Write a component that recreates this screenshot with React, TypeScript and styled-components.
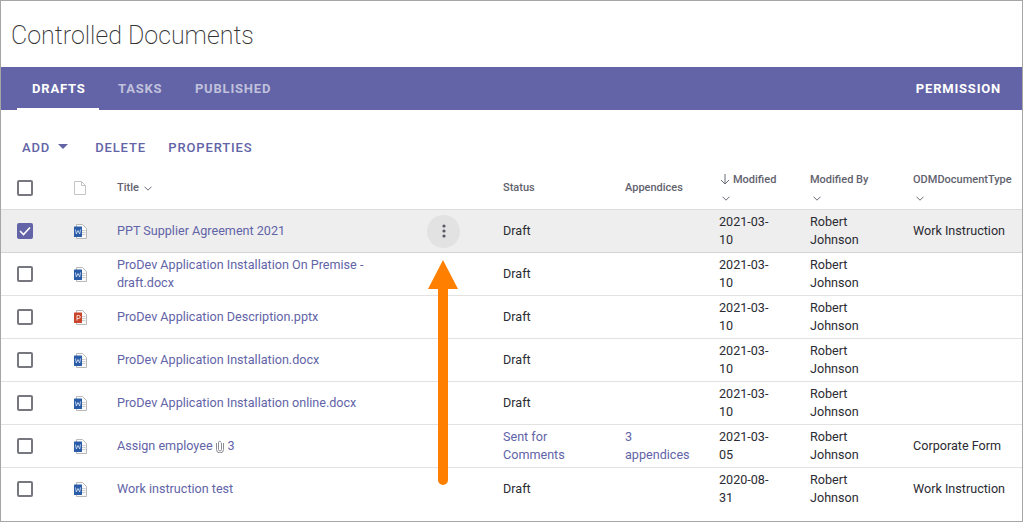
import React from "react";
import styled, { createGlobalStyle } from "styled-components";

const GlobalStyle = createGlobalStyle`
  html, body {
    margin: 0;
    padding: 0;
    background: #fff;
    font-family: Roboto, "Liberation Sans", sans-serif;
  }
`;

const COLUMNS = "72px 44px 386px 122px 94px 91px 103px 1fr";

const Frame = styled.div`
  position: relative;
  box-sizing: border-box;
  width: 1023px;
  height: 522px;
  border: 1px solid #a6a6a6;
  overflow: hidden;
  background: #fff;
`;

const PageTitle = styled.h1`
  margin: 0;
  height: 66px;
  padding: 2px 0 0 10px;
  box-sizing: border-box;
  display: flex;
  align-items: center;
  font-size: 25px;
  font-weight: 200;
  color: #333;
`;

const TabBar = styled.div`
  display: flex;
  height: 43px;
  background: #6264a7;
  padding: 0 21px 0 16px;
`;

const Tab = styled.div<{ $active?: boolean }>`
  box-sizing: border-box;
  height: 43px;
  padding: 2px 13.5px 0 15px;
  margin-right: 4px;
  display: flex;
  align-items: center;
  font-size: 13px;
  font-weight: 700;
  letter-spacing: 0.8px;
  color: ${({ $active }) => ($active ? "#fff" : "#c0c1dc")};
  border-bottom: 2px solid ${({ $active }) => ($active ? "#fff" : "transparent")};
`;

const Permission = styled.div`
  margin-left: auto;
  display: flex;
  align-items: center;
  font-size: 13px;
  font-weight: 700;
  letter-spacing: 0.8px;
  color: #fff;
`;

const Toolbar = styled.div`
  display: flex;
  align-items: center;
  height: 26px;
  margin-top: 24px;
  padding-left: 21px;
`;

const ToolButton = styled.div`
  display: flex;
  align-items: center;
  margin-right: 22.5px;
  font-size: 13px;
  font-weight: 500;
  letter-spacing: 0.85px;
  color: #6264a7;
`;

const Caret = styled.span`
  width: 0;
  height: 0;
  margin: -1px 4.5px 0 8px;
  border-left: 5px solid transparent;
  border-right: 5px solid transparent;
  border-top: 5px solid #6264a7;
`;

const HeaderRow = styled.div`
  display: grid;
  grid-template-columns: ${COLUMNS};
  height: 41px;
  margin-top: 9px;
  padding-bottom: 2px;
  align-items: center;
  border-bottom: 1px solid #dcdcdc;
  box-sizing: border-box;
`;

const HeaderCell = styled.div`
  font-size: 11px;
  font-weight: 500;
  line-height: 18px;
  color: #62626e;
`;

const StackedHeader = styled(HeaderCell)`
  padding-top: 2px;
`;

const Rows = styled.div`
  display: flex;
  flex-direction: column;
`;

const Row = styled.div<{ $selected?: boolean }>`
  display: grid;
  grid-template-columns: ${COLUMNS};
  height: 43px;
  box-sizing: border-box;
  align-items: center;
  background: ${({ $selected }) => ($selected ? "#eeeeee" : "#fff")};
  border-bottom: 1px solid ${({ $selected }) => ($selected ? "#d4d4d4" : "#e2e2e2")};
  &:last-child {
    border-bottom-color: transparent;
  }
`;

const CheckCell = styled.div`
  padding-left: 16px;
  display: flex;
`;

const Check = styled.span<{ $checked?: boolean }>`
  box-sizing: border-box;
  width: 16px;
  height: 16px;
  border-radius: 2px;
  border: 2px solid ${({ $checked }) => ($checked ? "#6264a7" : "#77777f")};
  background: ${({ $checked }) => ($checked ? "#6264a7" : "#fff")};
  display: flex;
  align-items: center;
  justify-content: center;
`;

const IconCell = styled.div`
  display: flex;
  padding-left: 1px;
`;

const TitleCell = styled.div`
  display: flex;
  align-items: center;
  justify-content: space-between;
  padding-right: 43px;
`;

const DocLink = styled.div`
  width: 275px;
  font-size: 12.6px;
  line-height: 18px;
  color: #6264a7;
`;

const Text = styled.div`
  font-size: 12.6px;
  line-height: 18px;
  color: #2b2b33;
`;

const LinkText = styled(Text)`
  width: 70px;
  color: #6264a7;
`;

const MoreButton = styled.div`
  flex: none;
  width: 33px;
  height: 33px;
  border-radius: 50%;
  background: #e2e2e2;
  display: flex;
  align-items: center;
  justify-content: center;
`;

const ArrowOverlay = styled.svg`
  position: absolute;
  left: 426px;
  top: 257px;
`;

const ChevronIcon = styled.svg<{ $gap: number }>`
  margin-left: ${({ $gap }) => $gap}px;
`;

const Chevron = ({ gap = 3 }: { gap?: number }) => (
  <ChevronIcon $gap={gap} width="8" height="5" viewBox="0 0 8 5" fill="none" stroke="#6b6b78" strokeWidth="1">
    <path d="M.5.7 4 4.200 7.500.7" />
  </ChevronIcon>
);

const BlankFile = () => (
  <svg width="12" height="14" viewBox="0 0 12 14" fill="#fff" stroke="#c4c4c4" strokeWidth="1">
    <path d="M.5.5h7l4 4v9h-11zM7.500.5v4h4" />
  </svg>
);

const FileIcon = ({ type }: { type: "word" | "ppt" }) => (
  <svg width="13" height="15" viewBox="0 0 13 15">
    <path d="M2.500.5h6l4 4v10h-10z" fill="#fafafa" stroke="#b9b9b9" />
    <path d="M8 6.500h3.500M8 8.500h3.500M8 10.500h3.500" stroke="#cfcfcf" />
    <rect x="0" y="2.500" width="8" height="10.500" rx="0.5" fill={type === "word" ? "#2b5ca8" : "#c8442a"} />
    {type === "word" ? (
      <path d="M1.500 5.500l.8 4.500 1.700-3.500 1.700 3.500.8-4.500" fill="none" stroke="#dbe6f5" strokeWidth="0.8" />
    ) : (
      <path d="M3 10.500V5.500h1.700a1.400 1.400 0 0 1 0 3H3" fill="none" stroke="#f8dfd9" strokeWidth="1" />
    )}
  </svg>
);

const ClipIcon = styled.svg`
  margin: 0 4px 0 3px;
  vertical-align: -3px;
`;

const Clip = () => (
  <ClipIcon width="8" height="13" viewBox="0 0 8 13" fill="none" stroke="#8a8a94" strokeWidth="1">
    <path d="M5.500 3v6.500a1.500 1.500 0 0 1-3 0V2.500a1.200 1.200 0 0 1 2.400 0" />
    <path d="M7.500 3v6.500a3.500 3.500 0 0 1-7 0V3" />
  </ClipIcon>
);

const SortArrow = styled.svg`
  vertical-align: -2px;
  margin-right: 2px;
`;

interface IDoc {
  title: React.ReactNode;
  file: "word" | "ppt";
  status?: string;
  appendices?: string;
  modified: string;
  type?: string;
}

const docs: IDoc[] = [
  { title: "PPT Supplier Agreement 2021", file: "word", modified: "2021-03-10", type: "Work Instruction" },
  { title: "ProDev Application Installation On Premise - draft.docx", file: "word", modified: "2021-03-10" },
  { title: "ProDev Application Description.pptx", file: "ppt", modified: "2021-03-10" },
  { title: "ProDev Application Installation.docx", file: "word", modified: "2021-03-10" },
  { title: "ProDev Application Installation online.docx", file: "word", modified: "2021-03-10" },
  {
    title: (
      <>
        Assign employee
        <Clip />3
      </>
    ),
    file: "word",
    status: "Sent for Comments",
    appendices: "3 appendices",
    modified: "2021-03-05",
    type: "Corporate Form",
  },
  { title: "Work instruction test", file: "word", modified: "2020-08-31", type: "Work Instruction" },
];

export default function App(): React.JSX.Element {
  return (
    <Frame>
      <GlobalStyle />
      <PageTitle>Controlled Documents</PageTitle>
      <TabBar>
        <Tab $active>DRAFTS</Tab>
        <Tab>TASKS</Tab>
        <Tab>PUBLISHED</Tab>
        <Permission>PERMISSION</Permission>
      </TabBar>
      <Toolbar>
        <ToolButton>
          ADD
          <Caret />
        </ToolButton>
        <ToolButton>DELETE</ToolButton>
        <ToolButton>PROPERTIES</ToolButton>
      </Toolbar>
      <HeaderRow>
        <CheckCell>
          <Check />
        </CheckCell>
        <IconCell>
          <BlankFile />
        </IconCell>
        <HeaderCell>
          Title
          <Chevron gap={5} />
        </HeaderCell>
        <HeaderCell>Status</HeaderCell>
        <HeaderCell>Appendices</HeaderCell>
        <StackedHeader>
          <SortArrow width="12" height="12" viewBox="0 0 12 12" fill="none" stroke="#6b6b78">
            <path d="M6 1v10M2 7l4 4 4-4" />
          </SortArrow>
          Modified
          <br />
          <Chevron />
        </StackedHeader>
        <StackedHeader>
          Modified By
          <br />
          <Chevron />
        </StackedHeader>
        <StackedHeader>
          ODMDocumentType
          <br />
          <Chevron />
        </StackedHeader>
      </HeaderRow>
      <Rows>
        {docs.map((doc, i) => (
          <Row key={i} $selected={i === 0}>
            <CheckCell>
              <Check $checked={i === 0}>
                {i === 0 && (
                  <svg width="12" height="10" viewBox="0 0 12 10" fill="none" stroke="#fff" strokeWidth="1.6">
                    <path d="M1 5l3.500 3.500L11 1.500" />
                  </svg>
                )}
              </Check>
            </CheckCell>
            <IconCell>
              <FileIcon type={doc.file} />
            </IconCell>
            <TitleCell>
              <DocLink>{doc.title}</DocLink>
              {i === 0 && (
                <MoreButton>
                  <svg width="4" height="14" viewBox="0 0 4 14" fill="#5a5a66">
                    <circle cx="2" cy="2" r="1.600" />
                    <circle cx="2" cy="7" r="1.600" />
                    <circle cx="2" cy="12" r="1.600" />
                  </svg>
                </MoreButton>
              )}
            </TitleCell>
            {doc.status ? <LinkText>{doc.status}</LinkText> : <Text>Draft</Text>}
            <LinkText>{doc.appendices}</LinkText>
            <Text>
              {doc.modified.slice(0, 8)}
              <br />
              {doc.modified.slice(8)}
            </Text>
            <Text>
              Robert
              <br />
              Johnson
            </Text>
            <Text>{doc.type}</Text>
          </Row>
        ))}
      </Rows>
      <ArrowOverlay width="32" height="228" viewBox="0 0 32 228">
        <path d="M16 2 31 31H21V222a5 5 0 0 1-10 0V31H1z" fill="#ff8000" />
      </ArrowOverlay>
    </Frame>
  );
}
